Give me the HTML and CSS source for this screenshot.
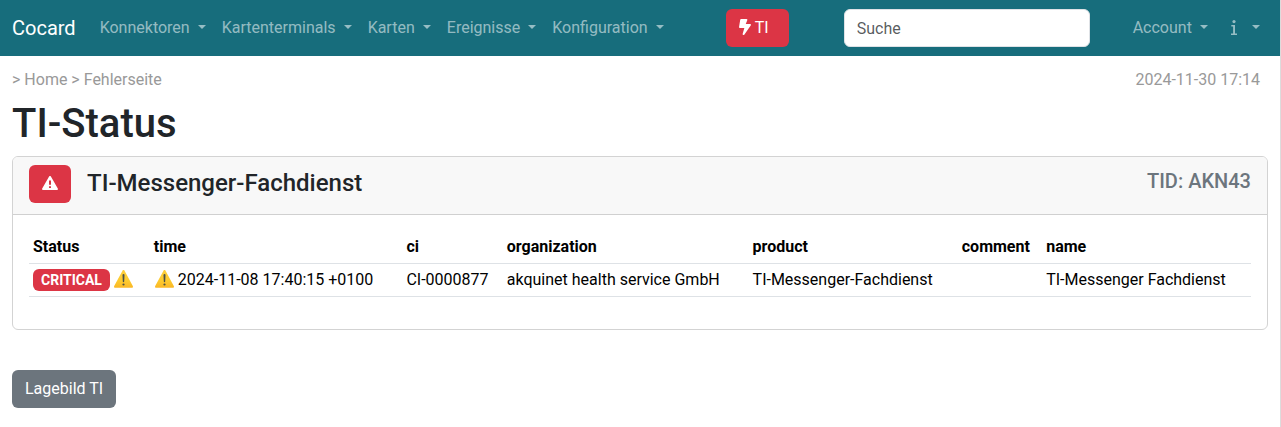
FILE: index.html
```html
<!DOCTYPE html>
<html lang="de">
<head>
<meta charset="utf-8">
<title>Cocard</title>
<link rel="stylesheet" href="styles.css">
</head>
<body>
<svg class="defs" width="0" height="0" aria-hidden="true">
  <defs>
    <linearGradient id="amber" x1="0" y1="0" x2="0" y2="1"><stop offset="0" stop-color="#fecf3e"/><stop offset=".6" stop-color="#fdcb2f"/><stop offset="1" stop-color="#fab726"/></linearGradient>
    <symbol id="warn" viewBox="0 0 19 18">
      <path d="M8.600.4a1 1 0 0 1 1.800 0l8.400 15.700c.4.8 0 1.700-.9 1.700H1.100c-.9 0-1.300-.9-.9-1.700z" fill="url(#amber)"/>
      <path d="M8.500 5c0-.6.400-.9 1-.9s1 .3 1 .9l-.3 6.400c0 .5-.3.8-.7.8s-.7-.3-.7-.8z" fill="#4a5048"/><circle cx="9.500" cy="14.500" r="1.100" fill="#4a5048"/>
    </symbol>
  </defs>
</svg>
<nav class="navbar">
  <a class="brand">Cocard</a>
  <ul class="nav">
    <li class="nav-link">Konnektoren <span class="caret"></span></li>
    <li class="nav-link">Kartenterminals <span class="caret"></span></li>
    <li class="nav-link">Karten <span class="caret"></span></li>
    <li class="nav-link">Ereignisse <span class="caret"></span></li>
    <li class="nav-link">Konfiguration <span class="caret"></span></li>
  </ul>
  <a class="btn btn-danger btn-ti"><svg class="bolt" width="12" height="16" viewBox="0 0 320 512" preserveAspectRatio="none"><path d="M296 160H180.600l42.600-129.800C227.200 15 215.700 0 200 0H56C44 0 33.800 8.900 32.200 20.800l-32 240C-1.700 275.200 9.500 288 24 288h118.700L96.600 482.500c-3.600 15.200 8 29.500 23.300 29.500 8.400 0 16.400-4.400 20.800-12l176-304c9.300-15.900-2.200-36-20.700-36z" fill="#fff"/></svg>TI</a>
  <input class="search" type="text" placeholder="Suche">
  <ul class="nav nav-end">
    <li class="nav-link">Account <span class="caret"></span></li>
    <li class="nav-link nav-info"><svg class="info" width="6" height="15" viewBox="0 0 6 15" fill="currentColor"><circle cx="3" cy="1.600" r="1.600"/><path d="M.3 5H4v8.400h2V15H0v-1.600h2.100V6.600H.3z"/></svg><span class="caret"></span></li>
  </ul>
</nav>
<main class="content">
  <div class="crumbs"><span>&gt; Home &gt; Fehlerseite</span><span class="stamp">2024-11-30 17:14</span></div>
  <h1>TI-Status</h1>
  <section class="card">
    <header class="card-header">
      <span class="btn btn-danger"><svg class="alert" width="16" height="14" viewBox="0 0 16 14"><path fill="#fff" fill-rule="evenodd" d="M7.100.5a1 1 0 0 1 1.800 0l6.900 12.100c.4.7 0 1.400-.8 1.400H1c-.8 0-1.200-.7-.8-1.400zM7 4.500v4.300h2V4.500zM7 10.200v1.900h2v-1.900z"/></svg></span>
      <h4>TI-Messenger-Fachdienst</h4>
      <h5>TID: AKN43</h5>
    </header>
    <div class="card-body">
      <table class="table">
        <colgroup><col class="c-status"><col class="c-time"><col class="c-ci"><col class="c-org"><col class="c-product"><col class="c-comment"><col></colgroup>
        <thead><tr><th>Status</th><th>time</th><th>ci</th><th>organization</th><th>product</th><th>comment</th><th>name</th></tr></thead>
        <tbody><tr>
          <td><span class="badge">CRITICAL</span><svg class="emoji emoji-badge"><use href="#warn"/></svg></td>
          <td><svg class="emoji emoji-time"><use href="#warn"/></svg>2024-11-08 17:40:15 +0100</td>
          <td>CI-0000877</td><td>akquinet health service GmbH</td><td>TI-Messenger-Fachdienst</td><td></td><td>TI-Messenger Fachdienst</td>
        </tr></tbody>
      </table>
    </div>
  </section>
  <a class="btn btn-secondary">Lagebild TI</a>
</main>
</body>
</html>
```

FILE: styles.css
```css
* { box-sizing: border-box; }
html { background: #fff; overflow: hidden; }
body {
  margin: 0;
  height: 427px;
  border-right: 1px solid #dcdcdc;
  font: 400 16px/24px Roboto, "Liberation Sans", sans-serif;
  color: #212529;
}
.defs { display: block; width: 0; height: 0; }
h1, h4, h5 { margin: 0; font-weight: 500; line-height: 1.2; }
.navbar {
  display: flex;
  align-items: center;
  height: 56px;
  padding: 0 12px;
  background: #176d7c;
}
.brand { margin-right: 16px; font-size: 20px; line-height: 30px; color: #fff; }
.nav { display: flex; margin: 0; padding: 0; list-style: none; }
.nav-link { padding: 8px; white-space: nowrap; color: rgba(255, 255, 255, .55); }
.nav-end { margin-left: auto; }
.caret {
  display: inline-block;
  margin-left: 4.08px;
  vertical-align: 4.08px;
  border-top: 4.8px solid;
  border-right: 4.8px solid transparent;
  border-left: 4.8px solid transparent;
}
.nav-info { padding-left: 15px; }
.info { margin-right: 11px; vertical-align: -2px; }
.btn {
  display: inline-block;
  height: 38px;
  padding: 7px 13px;
  border-radius: 6px;
  color: #fff;
}
.btn-danger { background: #dc3545; }
.btn-ti { width: 63px; margin-left: 54px; white-space: nowrap; }
.bolt { margin-right: 4px; vertical-align: -2px; }
.search {
  width: 246px;
  height: 38px;
  margin-left: 55px;
  padding: 6px 12px;
  border: 1px solid #dee2e6;
  border-radius: 6px;
  background: #fff;
  font: inherit;
}
.search::placeholder { color: rgba(33, 37, 41, .75); opacity: 1; }
.content { padding: 12px 12px 0; }
.crumbs { display: flex; justify-content: space-between; margin-bottom: 8px; padding-right: 8px; color: #999; }
h1 { margin-bottom: 8px; font-size: 40px; }
.card { margin-bottom: 40px; border: 1px solid #d3d3d3; border-radius: 6px; }
.card-header {
  display: flex;
  align-items: flex-start;
  height: 58px;
  padding: 8px 16px;
  border-bottom: 1px solid #d0d0d0;
  border-radius: 5px 5px 0 0;
  background: #f8f8f8;
}
.alert { display: block; margin-top: 4px; }
h4 { margin: 4px 0 0 16px; font-size: 24px; }
h5 { margin: 4px 0 0 auto; font-size: 20px; color: #6c757d; }
.card-body { padding: 16px 16px 32px; }
.table { width: 100%; table-layout: fixed; border-collapse: separate; border-spacing: 0; color: #000; }
.c-status { width: 120.8px; }
.c-time { width: 252.6px; }
.c-ci { width: 100.4px; }
.c-org { width: 245.8px; }
.c-product { width: 209.2px; }
.c-comment { width: 84.4px; }
.table th, .table td {
  height: 33px;
  padding: 4px;
  border-bottom: 1px solid #dee2e6;
  line-height: 24px;
  text-align: left;
  white-space: nowrap;
}
.badge {
  display: inline-block;
  padding: 4px 8px;
  border-radius: 6px;
  background: #dc3545;
  font-size: 14px;
  font-weight: 700;
  line-height: 14px;
  color: #fff;
}
.emoji { width: 19px; height: 18px; vertical-align: -3px; }
.emoji-badge { margin-left: 4px; }
.emoji-time { margin: 0 4px 0 1px; }
.btn-secondary { background: #6c757d; }
```
